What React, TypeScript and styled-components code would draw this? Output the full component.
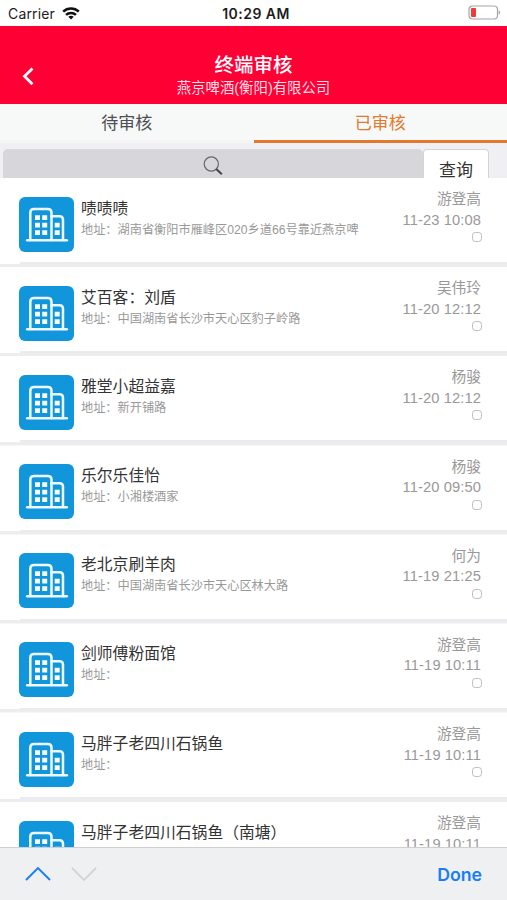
import React from 'react';
import styled, { createGlobalStyle } from 'styled-components';

const Global = createGlobalStyle`
  * { box-sizing: border-box; }
  html, body { margin: 0; padding: 0; background: #fff; overflow: hidden; }
  body { font-family: "Liberation Sans", "Noto Sans CJK SC", sans-serif; }
`;

const Screen = styled.div`
  width: 507px;
  height: 900px;
  display: flex;
  flex-direction: column;
  overflow: hidden;
  background: #fff;
`;

const StatusBar = styled.div`
  height: 25.5px;
  flex: none;
  display: grid;
  grid-template-columns: 1fr auto 1fr;
  align-items: center;
  padding: 2px 6px 0 8px;
  font-family: Inter, sans-serif;
  color: #1c1c1e;
`;

const Carrier = styled.div`
  display: flex;
  align-items: center;
  gap: 7px;
  font-size: 14px;
  letter-spacing: 0.15px;
`;

const Clock = styled.div`
  font-size: 14px;
  font-weight: 600;
  letter-spacing: 0.45px;
  padding-left: 3px;
`;

const BatterySvg = styled.svg`
  justify-self: end;
  display: block;
  margin-top: -2px;
`;

const Header = styled.header`
  height: 78px;
  flex: none;
  display: grid;
  grid-template-columns: 60px 1fr 60px;
  background: #ff0035;
  color: #fff;
`;

const BackButton = styled.button`
  border: 0;
  padding: 41px 0 0 22px;
  background: none;
  display: flex;
  align-items: flex-start;
`;

const Heading = styled.div`
  padding-top: 26px;
  text-align: center;
`;

const Title = styled.h1`
  margin: 0;
  font-size: 19.5px;
  line-height: 26px;
  font-weight: 500;
`;

const Subtitle = styled.div`
  font-size: 14.4px;
  line-height: 20px;
  color: #ffdce3;
`;

const Tabs = styled.nav`
  height: 39px;
  flex: none;
  display: grid;
  grid-template-columns: 1fr 1fr;
  background: #f7f8f8;
`;

const Tab = styled.button<{ $active?: boolean }>`
  border: 0;
  border-bottom: 3px solid ${p => (p.$active ? '#e27a2d' : '#f5f5f6')};
  padding: 4px 0 0;
  background: none;
  font-family: inherit;
  font-size: 17px;
  line-height: 32px;
  color: ${p => (p.$active ? '#e27a2d' : '#4c4f53')};
`;

const SearchBar = styled.div`
  height: 35.5px;
  flex: none;
  display: flex;
  padding: 6.5px 18px 0 3px;
  background: #efeff4;
`;

const SearchField = styled.div`
  flex: 1;
  display: flex;
  justify-content: center;
  padding: 7px 1px 0 0;
  border-radius: 5px 5px 0 0;
  background: #d7d6db;
`;

const QueryButton = styled.button`
  width: 66px;
  height: 29px;
  padding: 14px 0 0;
  border: 1px solid #d3d3d7;
  border-bottom: 0;
  border-radius: 4px 4px 0 0;
  background: #fff;
  color: #333;
  font-family: inherit;
  font-size: 17px;
  line-height: 14px;
`;

const List = styled.main`
  flex: 1;
  min-height: 0;
  overflow: hidden;
`;

const Row = styled.article`
  height: 89.2px;
  display: flex;
  padding: 18.5px 26px 0 19px;
  background:
    linear-gradient(#ebebee, #ebebee) 20px 84px / 100% 2px no-repeat,
    linear-gradient(#ededf0, #ededf0) 0 85.5px / 100% 3.5px no-repeat,
    #fff;
`;

const Thumb = styled.svg`
  flex: none;
  width: 55px;
  height: 55px;
  display: block;
`;

const Info = styled.div`
  flex: 1;
  min-width: 0;
  padding: 1px 0 0 7px;
  white-space: nowrap;
`;

const Name = styled.div`
  font-size: 15.8px;
  line-height: 22px;
  color: #333;
`;

const Address = styled.div`
  font-size: 12.2px;
  line-height: 20px;
  color: #999;
`;

const Meta = styled.div`
  flex: none;
  margin-top: -7.5px;
  display: flex;
  flex-direction: column;
  align-items: flex-end;
  font-size: 14.7px;
  line-height: 20.5px;
  color: #999;
`;

const Time = styled.span`
  letter-spacing: 0.1px;
`;

const Marker = styled.span`
  width: 10px;
  height: 10px;
  margin: 2px -1px 0 0;
  border: 1px solid #bbb;
  border-radius: 3.5px;
`;

const Accessory = styled.footer`
  height: 53.5px;
  flex: none;
  display: flex;
  align-items: center;
  gap: 20px;
  padding: 0 25px;
  border-top: 1px solid #cfcfd1;
  background: #eff0f1;
`;

const Done = styled.button`
  margin-left: auto;
  padding: 1px 0 0;
  border: 0;
  background: none;
  font-family: Inter, sans-serif;
  font-size: 17.7px;
  font-weight: 600;
  color: #177efb;
`;

const WifiIcon = () => (
  <svg width="18" height="13" viewBox="0 0 18 13" fill="none" stroke="#111" strokeWidth="2.5">
    <path d="M1.2 4.6C5.6.4 12.4.4 16.8 4.6" />
    <path d="M4 7.9c2.8-2.7 7.2-2.7 10 0" />
    <path d="M6.3 9.8c1.6-1.3 3.8-1.3 5.4 0L9 12.6z" fill="#111" stroke="none" />
  </svg>
);

const BatteryIcon = () => (
  <BatterySvg width="33" height="15" viewBox="0 0 33 15">
    <rect x="1" y="1" width="28.5" height="13" rx="3.5" fill="#fff" stroke="#a5a5a8" strokeWidth="1.2" />
    <rect x="3" y="3" width="5" height="9" rx="1" fill="#f03a35" />
    <path d="M30.6 5.5c2 .5 2 3.500 0 4z" fill="#a5a5a8" />
  </BatterySvg>
);

const BackIcon = () => (
  <svg width="13" height="19" viewBox="0 0 13 19" fill="none" stroke="#fff" strokeWidth="2.8">
    <path d="M10.5 1.5 2.5 9.3l8 8" />
  </svg>
);

const SearchIcon = () => (
  <svg width="20" height="20" viewBox="0 0 20 20" fill="none">
    <circle cx="8.3" cy="8" r="7.1" stroke="#68686c" strokeWidth="1.2" />
    <path d="m13.3 13 5.5 5.3" stroke="#454549" strokeWidth="2" />
  </svg>
);

const BuildingIcon = () => (
  <Thumb viewBox="0 0 55 55">
    <rect width="55" height="55" rx="6" fill="#1296db" />
    <g fill="none" stroke="#eefaff" strokeWidth="2.5" strokeLinecap="round" strokeLinejoin="round">
      <path d="M8.2 43.3h39.6" />
      <path d="M11.3 43V15.7q0-3.7 3.7-3.7h13.8q3.7 0 3.7 3.7V43" />
      <path d="M32.5 19.3h8q3.5 0 3.5 3.5V43" />
    </g>
    <path
      fill="#f7fdff"
      d="M16 18.3h5v4.8h-5zM23.2 18.3h5v4.8h-5zM16 25.7h5v4.8h-5zM23.2 25.7h5v4.8h-5zM16 33.2h5v4.8h-5zM23.2 33.2h5v4.8h-5zM35.7 25.7h5v4.8h-5zM35.7 33.2h5v4.8h-5z"
    />
  </Thumb>
);

const Chevron = ({ up }: { up?: boolean }) => (
  <svg width="26" height="16" viewBox="0 0 26 16" fill="none" stroke={up ? '#177efb' : '#d3d4d6'} strokeWidth="1.9">
    <path d={up ? 'M1 14 13 2l12 12' : 'm1 2 12 12L25 2'} />
  </svg>
);

const entries = [
  { name: '啧啧啧', address: '湖南省衡阳市雁峰区020乡道66号靠近燕京啤', person: '游登高', time: '11-23 10:08' },
  { name: '艾百客：刘盾', address: '中国湖南省长沙市天心区豹子岭路', person: '吴伟玲', time: '11-20 12:12' },
  { name: '雅堂小超益嘉', address: '新开铺路', person: '杨骏', time: '11-20 12:12' },
  { name: '乐尔乐佳怡', address: '小湘楼酒家', person: '杨骏', time: '11-20 09:50' },
  { name: '老北京刷羊肉', address: '中国湖南省长沙市天心区林大路', person: '何为', time: '11-19 21:25' },
  { name: '剑师傅粉面馆', address: '', person: '游登高', time: '11-19 10:11' },
  { name: '马胖子老四川石锅鱼', address: '', person: '游登高', time: '11-19 10:11' },
  { name: '马胖子老四川石锅鱼（南塘）', person: '游登高', time: '11-19 10:11' },
];

export default function App() {
  return (
    <>
      <Global />
      <Screen lang="zh-CN">
        <StatusBar>
          <Carrier>Carrier <WifiIcon /></Carrier>
          <Clock>10:29 AM</Clock>
          <BatteryIcon />
        </StatusBar>
        <Header>
          <BackButton aria-label="返回"><BackIcon /></BackButton>
          <Heading>
            <Title>终端审核</Title>
            <Subtitle>燕京啤酒(衡阳)有限公司</Subtitle>
          </Heading>
        </Header>
        <Tabs>
          <Tab>待审核</Tab>
          <Tab $active>已审核</Tab>
        </Tabs>
        <SearchBar>
          <SearchField><SearchIcon /></SearchField>
          <QueryButton>查询</QueryButton>
        </SearchBar>
        <List>
          {entries.map((e, i) => (
            <Row key={i}>
              <BuildingIcon />
              <Info>
                <Name>{e.name}</Name>
                {e.address !== undefined && <Address>地址：{e.address}</Address>}
              </Info>
              <Meta>
                <span>{e.person}</span>
                <Time>{e.time}</Time>
                <Marker />
              </Meta>
            </Row>
          ))}
        </List>
        <Accessory>
          <Chevron up />
          <Chevron />
          <Done>Done</Done>
        </Accessory>
      </Screen>
    </>
  );
}
